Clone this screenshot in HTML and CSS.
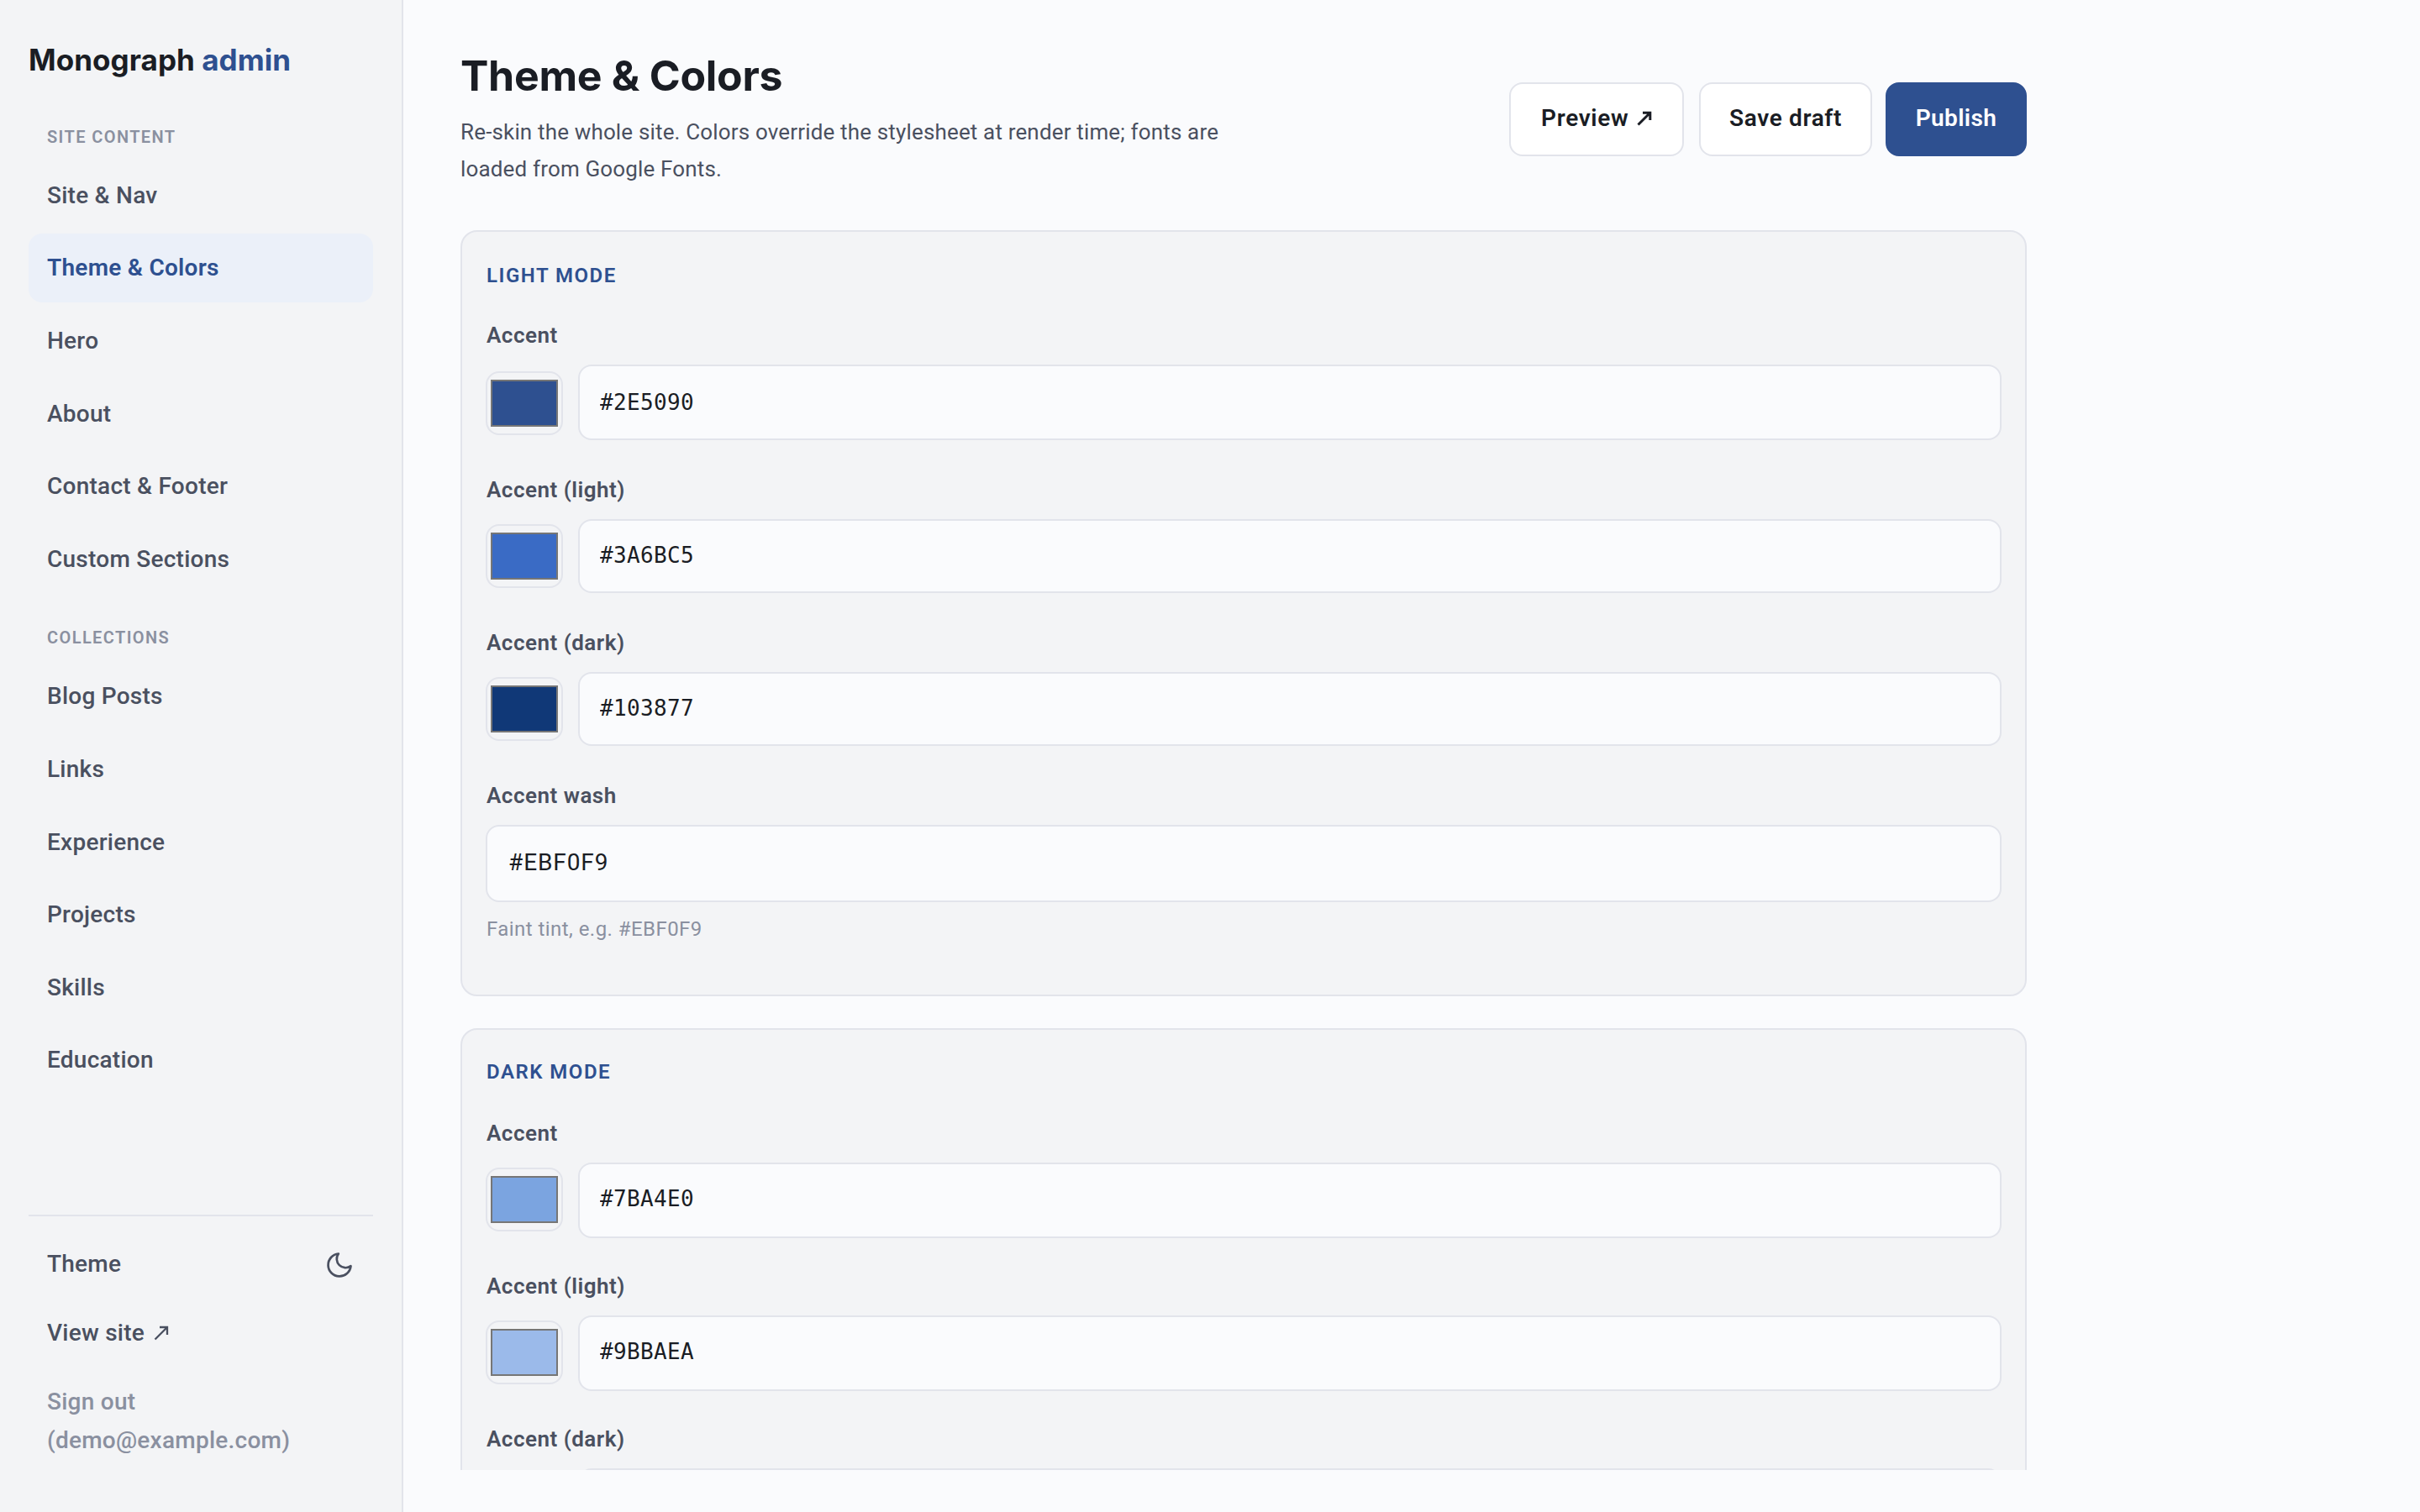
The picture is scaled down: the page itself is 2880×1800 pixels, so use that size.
FILE: index.html
```html
<!DOCTYPE html>
<html lang="en">
<head>
    <meta charset="UTF-8">
    <meta name="viewport" content="width=device-width, initial-scale=1.0">
    <title>Monograph admin</title>
    <link rel="stylesheet" href="styles.css">
</head>
<body>
    <aside class="sidebar">
        <div class="brand">Monograph <span>admin</span></div>

        <div class="nav-label">Site content</div>
        <nav class="nav">
            <a>Site &amp; Nav</a>
            <a class="active">Theme &amp; Colors</a>
            <a>Hero</a>
            <a>About</a>
            <a>Contact &amp; Footer</a>
            <a>Custom Sections</a>
        </nav>

        <div class="nav-label">Collections</div>
        <nav class="nav">
            <a>Blog Posts</a>
            <a>Links</a>
            <a>Experience</a>
            <a>Projects</a>
            <a>Skills</a>
            <a>Education</a>
        </nav>

        <div class="sidebar-foot">
            <a class="theme-toggle">Theme
                <svg class="icon-moon" viewBox="0 0 24 24" fill="none" stroke="currentColor" stroke-width="1.8" stroke-linecap="round" stroke-linejoin="round"><path d="M21 12.79A9 9 0 1 1 11.21 3 7 7 0 0 0 21 12.79z"/></svg>
            </a>
            <a>View site <svg class="icon-arrow" viewBox="0 0 18 18" fill="none" stroke="currentColor" stroke-width="2.3"><path d="M1.5 16.5L15.5 2.5M7 2H16V11"/></svg></a>
            <a class="sign-out">Sign out<br>(demo@example.com)</a>
        </div>
    </aside>

    <main class="main">
        <header class="page-head">
            <div>
                <h1>Theme &amp; Colors</h1>
                <p>Re-skin the whole site. Colors override the stylesheet at render time; fonts are loaded from Google Fonts.</p>
            </div>
            <div class="actions">
                <button class="btn btn-preview">Preview <svg class="icon-arrow" viewBox="0 0 18 18" fill="none" stroke="currentColor" stroke-width="3"><path d="M1.5 16.5L15.5 2.5M7 2.2H15.8V11"/></svg></button>
                <button class="btn btn-draft">Save draft</button>
                <button class="btn btn-primary">Publish</button>
            </div>
        </header>

        <section class="card card-light">
            <h2>Light mode</h2>
            <div class="field">
                <label>Accent</label>
                <div class="color-row">
                    <input type="color" value="#2e5090">
                    <input type="text" value="#2E5090">
                </div>
            </div>
            <div class="field">
                <label>Accent (light)</label>
                <div class="color-row">
                    <input type="color" value="#3a6bc5">
                    <input type="text" value="#3A6BC5">
                </div>
            </div>
            <div class="field">
                <label>Accent (dark)</label>
                <div class="color-row">
                    <input type="color" value="#103877">
                    <input type="text" value="#103877">
                </div>
            </div>
            <div class="field">
                <label>Accent wash</label>
                <input type="text" class="wide" value="#EBF0F9">
                <div class="hint">Faint tint, e.g. #EBF0F9</div>
            </div>
        </section>

        <section class="card card-dark">
            <h2>Dark mode</h2>
            <div class="field">
                <label>Accent</label>
                <div class="color-row">
                    <input type="color" value="#7ba4e0">
                    <input type="text" value="#7BA4E0">
                </div>
            </div>
            <div class="field">
                <label>Accent (light)</label>
                <div class="color-row">
                    <input type="color" value="#9bbaea">
                    <input type="text" value="#9BBAEA">
                </div>
            </div>
            <div class="field">
                <label>Accent (dark)</label>
                <div class="color-row">
                    <input type="color" value="#5a86c9">
                    <input type="text" value="#5A86C9">
                </div>
            </div>
        </section>
    </main>
</body>
</html>
```
FILE: styles.css
```css
:root {
    --bg: #fafbfd;
    --surface: #f3f4f6;
    --border: #e2e4eb;
    --text: #1a1d24;
    --text-2: #4a5060;
    --muted: #8a90a0;
    --accent: #2e5090;
    --wash: #ebf0f9;
}
* {
    box-sizing: border-box;
}
body {
    margin: 0;
    height: 100vh;
    display: flex;
    overflow: hidden;
    background: var(--bg);
    color: var(--text);
    font-family: Roboto, "Liberation Sans", sans-serif;
    font-size: 28px;
}

/* sidebar */
.sidebar {
    width: 480px;
    flex-shrink: 0;
    display: flex;
    flex-direction: column;
    padding: 48px 34px 44px;
    background: var(--surface);
    border-right: 2px solid var(--border);
}
.brand {
    font-family: Inter, sans-serif;
    font-weight: 700;
    font-size: 35px;
    line-height: 46px;
    letter-spacing: 0.05px;
    margin-bottom: 54px;
}
.brand span {
    color: var(--accent);
}
.nav-label {
    padding-left: 22px;
    margin-bottom: 13px;
    font-size: 20px;
    line-height: 30px;
    font-weight: 600;
    letter-spacing: 1.4px;
    text-transform: uppercase;
    color: var(--muted);
}
.nav {
    display: flex;
    flex-direction: column;
    gap: 4.6px;
}
.nav + .nav-label {
    margin-top: 38.5px;
}
.nav a,
.sidebar-foot a {
    display: block;
    padding: 18px 22px;
    line-height: 46px;
    border-radius: 16px;
    font-weight: 500;
    letter-spacing: 0.25px;
    color: var(--text-2);
}
.nav a {
    padding: 19px 22px 17px;
}
.nav a.active {
    padding: 18px 22px;
    background: var(--wash);
    color: var(--accent);
    font-weight: 600;
}
.sidebar-foot {
    margin-top: auto;
    padding-top: 16px;
    border-top: 2px solid var(--border);
}
.sidebar-foot .theme-toggle {
    display: flex;
    justify-content: space-between;
    align-items: center;
}
.sidebar-foot .sign-out {
    color: var(--muted);
}
.icon-moon {
    width: 36px;
    height: 36px;
    margin-top: 2px;
}
.icon-arrow {
    width: 18px;
    height: 18px;
    margin-left: 2px;
}
.sidebar-foot .icon-arrow {
    margin-left: 4px;
}

/* main column, clipped above the bottom gutter */
.main {
    width: 1932px;
    height: 1750px;
    overflow: hidden;
    padding: 60px 0 0 68px;
}
.page-head {
    display: flex;
    justify-content: space-between;
    align-items: center;
    margin-bottom: 50px;
}
.page-head h1 {
    margin: 0 0 15px;
    font-family: Inter, sans-serif;
    font-weight: 700;
    font-size: 50px;
    line-height: 60px;
    letter-spacing: -0.28px;
}
.page-head p {
    margin: 0;
    max-width: 920px;
    padding-bottom: 1px;
    font-size: 26px;
    line-height: 44px;
    letter-spacing: 0.16px;
    color: var(--text-2);
}
.actions {
    display: flex;
}
.btn {
    height: 88px;
    padding: 0 0 4px;
    border: 2px solid var(--border);
    border-radius: 16px;
    background: #fff;
    color: var(--text);
    font-family: inherit;
    font-size: 28px;
    font-weight: 600;
    letter-spacing: 0.65px;
}
.btn-preview {
    width: 208px;
    margin-right: 18px;
}
.btn-draft {
    width: 206px;
    margin-right: 16px;
}
.btn-primary {
    width: 168px;
    background: var(--accent);
    border-color: var(--accent);
    color: #fff;
    letter-spacing: 0.4px;
}

/* cards */
.card {
    padding: 32px 28px 21px;
    margin-bottom: 38px;
    background: var(--surface);
    border: 2px solid var(--border);
    border-radius: 20px;
}
.card h2 {
    margin: 0 0 31px;
    padding-left: 1px;
    font-size: 24px;
    line-height: 40px;
    font-weight: 600;
    letter-spacing: 1.5px;
    text-transform: uppercase;
    color: var(--accent);
}
.field {
    margin-bottom: 39px;
}
.field label {
    display: block;
    margin-bottom: 15px;
    padding-left: 1px;
    font-size: 26px;
    line-height: 40px;
    font-weight: 600;
    letter-spacing: 0.5px;
    color: var(--text-2);
}
.color-row {
    display: flex;
    align-items: center;
    gap: 18px;
}
input[type="text"] {
    flex: 1;
    height: 90px;
    padding: 0 24px 1px;
    border: 2px solid var(--border);
    border-radius: 16px;
    background: var(--bg);
    color: var(--text);
    font-family: "DejaVu Sans Mono", monospace;
    font-size: 26px;
    letter-spacing: 0.35px;
}
input[type="text"].wide {
    display: block;
    width: 100%;
    height: 92px;
    padding: 0 25px 3px;
    font-family: inherit;
    font-size: 28px;
    letter-spacing: 0.9px;
}
input[type="color"] {
    width: 92px;
    height: 76px;
    padding: 0;
    border: 2px solid var(--border);
    border-radius: 16px;
    background: none;
}
input[type="color"]::-webkit-color-swatch-wrapper {
    padding: 8px 4px;
}
input[type="color"]::-webkit-color-swatch {
    border: 2px solid #767676;
}
.hint {
    margin-top: 14px;
    padding-left: 1px;
    font-size: 24px;
    line-height: 36px;
    letter-spacing: 0.45px;
    color: var(--muted);
}
.card-light .field:nth-of-type(n+2) .color-row input[type="text"] {
    height: 88px;
    padding-bottom: 3px;
}
.card-light .field:first-of-type input[type="color"] {
    margin-top: 2px;
}
.card-dark {
    padding-top: 30px;
}
.card-dark h2 {
    margin-bottom: 33px;
}
.card-dark .field {
    margin-bottom: 37px;
}
.card-dark input[type="color"] {
    margin-bottom: 2px;
}
.card-dark input[type="text"] {
    padding-bottom: 4px;
}
```
